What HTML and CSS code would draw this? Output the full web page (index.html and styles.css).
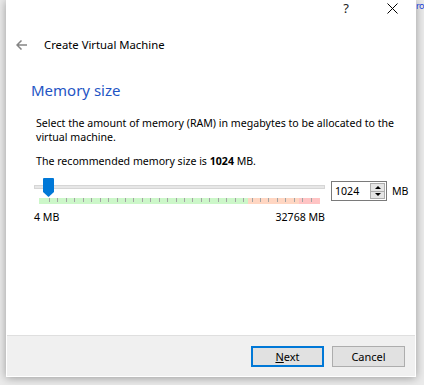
FILE: index.html
```html
<!DOCTYPE html>
<html>
<head>
  <meta charset="utf-8">
  <title>Create Virtual Machine</title>
  <link rel="stylesheet" href="styles.css">
</head>
<body>
  <div class="wizard">
    <div class="titlebar">
      <span class="cap-btn">?</span>
      <span class="cap-btn">
        <svg width="11" height="11" viewBox="0 0 11 11"><path d="M0.5 0.5L10.5 10.5M10.5 0.5L0.5 10.5" stroke="#000" stroke-width="1"/></svg>
      </span>
    </div>

    <div class="header">
      <svg class="back" width="11" height="10" viewBox="0 0 11 10"><path d="M1 5H11M5.5 0.5L1 5L5.5 9.5" fill="none" stroke="#858585" stroke-width="1.5"/></svg>
      <span>Create Virtual Machine</span>
    </div>

    <div class="page">
      <h1>Memory size</h1>
      <p class="desc">Select the amount of memory (RAM) in megabytes to be allocated to the virtual machine.</p>
      <p class="desc recommend">The recommended memory size is <b>1024</b> MB.</p>

      <div class="mem-row">
        <div class="slider">
          <div class="groove"></div>
          <svg class="thumb" width="11" height="19" viewBox="0 0 11 19"><path d="M1 0H10Q11 0 11 1V14L5.5 19L0 14V1Q0 0 1 0Z" fill="#0078d7"/></svg>
          <div class="scale"></div>
          <div class="limits"><span>4 MB</span><span>32768 MB</span></div>
        </div>
        <div class="spin">
          <span class="spin-value">1024</span>
          <div class="spin-arrows">
            <div class="arrow up"></div>
            <div class="arrow down"></div>
          </div>
        </div>
        <span class="unit">MB</span>
      </div>
    </div>

    <div class="footer">
      <button class="btn default"><u>N</u>ext</button>
      <button class="btn">Cancel</button>
    </div>
  </div>
  <div class="behind">ro</div>
</body>
</html>
```

FILE: styles.css
```css
* {
  box-sizing: border-box;
}

body {
  margin: 0;
  height: 385px;
  overflow: hidden;
  display: flex;
  background: #ebebeb;
  font-family: "Noto Sans", sans-serif;
  font-size: 10.6px;
  color: #000;
}

.wizard {
  margin-left: 6px;
  width: 410px;
  height: 377px;
  flex: none;
  display: flex;
  flex-direction: column;
  background: #fff;
  border: 1px solid #fff;
  box-shadow: 0 1px 9px rgba(0, 0, 0, 0.35);
}

.titlebar {
  height: 15px;
  display: flex;
  justify-content: flex-end;
}

.cap-btn {
  width: 46px;
  display: flex;
  align-items: center;
  justify-content: center;
  font-size: 13px;
  line-height: 15px;
  color: #222;
}

.header {
  padding: 21px 0 0 9px;
  display: flex;
  align-items: center;
  font-size: 11.3px;
  line-height: 16px;
}

.back {
  margin-right: 17px;
}

.page {
  flex: 1;
  padding: 0 0 0 24px;
}

h1 {
  margin: 27px 0 0;
  font-size: 15px;
  line-height: 20px;
  font-weight: normal;
  color: #1f55c4;
}

.desc {
  margin: 16px 0 0 5px;
  width: 365px;
  line-height: 14px;
}

.recommend {
  margin-top: 10px;
}

.mem-row {
  margin: 10px 0 0 3px;
  display: flex;
  align-items: flex-start;
}

.slider {
  position: relative;
  width: 291px;
  height: 50px;
}

.groove {
  margin-top: 7px;
  height: 4px;
  background: #e7e7e7;
  border: 1px solid #d6d6d6;
}

.thumb {
  position: absolute;
  left: 9px;
  top: 0;
}

.scale {
  margin: 9px 0 0 5px;
  width: 281px;
  height: 6px;
  background:
    repeating-linear-gradient(to right, #a3a3a3 0 1px, transparent 1px 8.44px) 10px 0 / 264px 4px no-repeat,
    linear-gradient(to right, #ccf7c9 0 209px, #ffd6c2 209px 260px, #ffc4c4 260px);
}

.limits {
  margin-top: 6px;
  display: flex;
  justify-content: space-between;
  line-height: 14px;
}

.spin {
  margin: 3px 0 0 6px;
  width: 56px;
  height: 20px;
  padding-left: 3px;
  display: flex;
  align-items: center;
  border: 1px solid #7a7a7a;
}

.spin-value {
  flex: 1;
}

.spin-arrows {
  width: 15px;
  height: 16px;
  margin-right: 1px;
  display: flex;
  flex-direction: column;
  border: 1px solid #adadad;
  background: #e5e5e5;
}

.arrow {
  flex: 1;
  display: flex;
  align-items: center;
  justify-content: center;
}

.arrow.up {
  border-bottom: 1px solid #adadad;
}

.arrow::before {
  content: "";
  border-left: 3px solid transparent;
  border-right: 3px solid transparent;
}

.arrow.up::before {
  border-bottom: 3px solid #000;
}

.arrow.down::before {
  border-top: 3px solid #000;
}

.unit {
  margin: 3px 0 0 5px;
  line-height: 20px;
}

.footer {
  height: 41px;
  padding-right: 10px;
  display: flex;
  align-items: center;
  justify-content: flex-end;
  gap: 8px;
  background: #f0f0f0;
  border-top: 1px solid #dfdfdf;
}

.btn {
  width: 73px;
  height: 21px;
  padding: 0;
  font-family: inherit;
  font-size: 11px;
  color: #000;
  background: #e1e1e1;
  border: 1px solid #adadad;
}

.btn.default {
  border: 2px solid #0078d7;
}

.behind {
  width: 8px;
  padding-top: 1px;
  font-size: 9px;
  line-height: 10px;
  letter-spacing: -0.5px;
  color: #1b3fd8;
  white-space: nowrap;
}
```
